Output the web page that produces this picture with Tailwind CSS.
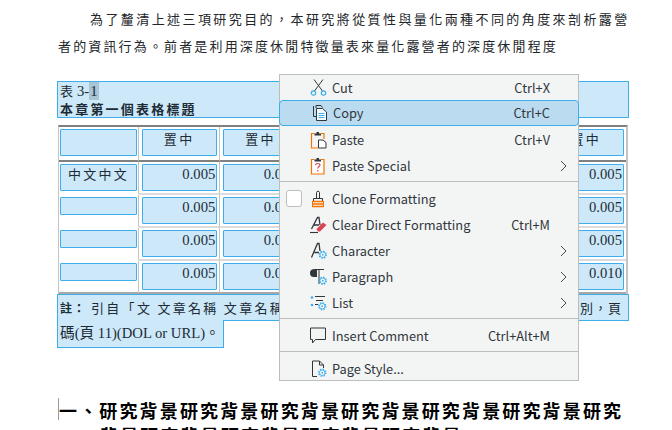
<!DOCTYPE html>
<html lang="zh-Hant">
<head>
    <meta charset="UTF-8">
    <title>Writer context menu</title>
    <script src="https://cdn.jsdelivr.net/npm/@tailwindcss/browser@4"></script>
</head>
<body class="bg-white">
    <svg class="hidden">
        <symbol id="gear" viewBox="0 0 10 10">
            <circle cx="5" cy="5" r="3.7" fill="none" stroke="#3daee9" stroke-width="1.5" stroke-dasharray="1.45 1.45"/>
            <circle cx="5" cy="5" r="2.9" fill="white" stroke="#3daee9" stroke-width="1"/>
            <circle cx="5" cy="5" r="1" fill="#3daee9"/>
        </symbol>
    </svg>

    <div class="relative w-[672px] h-[430px] overflow-hidden pl-[58px] pt-[5px] font-['Liberation_Serif','Noto_Sans_CJK_TC',serif] text-[#22262a]">
        <!-- Body text -->
        <div class="w-[570px] text-[13px] leading-[27px] whitespace-nowrap font-['Noto_Sans_CJK_TC',sans-serif]">
            <div class="pl-[32px] tracking-[2.42px]">為了釐清上述三項研究目的，本研究將從質性與量化兩種不同的角度來剖析露營</div>
            <div class="tracking-[2.15px]">者的資訊行為。前者是利用深度休閒特徵量表來量化露營者的深度休閒程度</div>
        </div>

        <!-- Caption -->
        <div class="mt-[22px] -ml-px w-[572px] h-[37px] border border-[#3daee9] bg-[#cde8f8] pl-[2px] text-[#1c2b36]">
            <div class="h-[18px] leading-[18px] text-[14.67px] flex">
                <span class="font-['Noto_Sans_CJK_TC',sans-serif] text-[13px] mr-[4px]">表</span><span>3-</span><span class="bg-[#a9c4d3] px-px">1</span>
            </div>
            <div class="h-[18px] leading-[18px] text-[13px] font-bold tracking-[2.2px] font-['Noto_Sans_CJK_TC',sans-serif]">本章第一個表格標題</div>
        </div>

        <!-- Table -->
        <div id="tbl" class="mt-[7px] w-[570px] border-t-2 border-t-[#808080] border-l border-l-[#c4c4c4] border-r-2 border-r-[#c4c4c4]"></div>

        <!-- Note -->
        <div class="-ml-px w-[572px] h-[27px] border border-[#3daee9] bg-[#cde8f8] pl-[2px] pr-[6px] flex justify-between items-center whitespace-nowrap text-[13px] tracking-[2.3px] font-['Noto_Sans_CJK_TC',sans-serif] text-[#1c2b36]">
            <span><b class="text-[12px] tracking-[1px] mr-[5px]">註：</b>引自「文 文章名稱 文章名稱</span>
            <span class="tracking-[1px]">別，頁</span>
        </div>
        <div class="-ml-px -mt-px w-[167px] h-[28px] border border-t-0 border-[#3daee9] bg-[#cde8f8] pl-[2px] leading-[26px] whitespace-nowrap text-[14.67px] text-[#1c2b36]">碼(頁 11)(DOL or URL)。</div>

        <!-- Heading -->
        <div class="mt-[50px] relative whitespace-nowrap text-[18px] leading-[27px] font-bold tracking-[2.15px] text-black font-['Noto_Sans_CJK_TC',sans-serif]">
            <div class="border-l border-[#9a9a9a] h-[22px] leading-[24px]">一、研究背景研究背景研究背景研究背景研究背景研究背景研究</div>
            <div class="pl-[42px] mt-[2px]">背景研究背景研究背景研究背景研究背景</div>
        </div>

        <!-- Context menu -->
        <div class="absolute left-[279px] top-[74px] w-[300px] h-[307px] border border-[#bcbdbd] bg-[#f3f5f5] text-[#31363b] text-[12.8px] font-['Noto_Sans_CJK_TC',sans-serif]">
            <div class="h-[26px] flex items-center pl-[30px] pr-[28px]">
                <svg class="w-[18px] h-[18px] shrink-0" viewBox="0 0 18 18" fill="none">
                    <path d="M4 .5 12.5 12M13 .5 4.5 12" stroke="#31363b" stroke-width="1"/>
                    <circle cx="3.5" cy="14" r="2.2" stroke="#3daee9" stroke-width="1.2"/>
                    <circle cx="13.5" cy="14" r="2.2" stroke="#3daee9" stroke-width="1.2"/>
                </svg>
                <span class="ml-[4px]">Cut</span><span class="ml-auto">Ctrl+X</span>
            </div>
            <div class="-mx-px -mt-px mb-px h-[26px] flex items-center pl-[31px] pr-[28px] rounded-[4px] border border-[#3daee9] bg-[#bbdcf0]">
                <svg class="w-[18px] h-[18px] shrink-0" viewBox="0 0 18 18" fill="none">
                    <path d="M5 4V1.5H10L11.5 3.5M2.5 2V12.5H5" stroke="#31363b" stroke-width="1"/>
                    <path d="M5.5 4.5H11.5L15.5 8V16.5H5.5Z" fill="#f3f9fd" stroke="#31363b" stroke-width="1"/>
                    <path d="M7.5 9.5H13.5M7.5 11.5H13.5M7.5 13.5H13.5" stroke="#3daee9" stroke-width="1"/>
                </svg>
                <span class="ml-[4px]">Copy</span><span class="ml-auto">Ctrl+C</span>
            </div>
            <div class="h-[26px] flex items-center pl-[30px] pr-[28px]">
                <svg class="w-[18px] h-[18px] shrink-0" viewBox="0 0 18 18" fill="none">
                    <path d="M4.5 2.5H1.5V17H8M11 2.5H14V8" stroke="#f67400" stroke-width="1.2"/>
                    <path d="M4.5 4.5V2.5H6.5V1H9V2.5H11V4.5Z" fill="#31363b"/>
                    <path d="M8.5 9H13L16 11.5V17H8.5Z" fill="white" stroke="#31363b" stroke-width="1"/>
                </svg>
                <span class="ml-[4px]">Paste</span><span class="ml-auto">Ctrl+V</span>
            </div>
            <div class="h-[26px] flex items-center pl-[30px] pr-[11px]">
                <svg class="w-[18px] h-[18px] shrink-0" viewBox="0 0 18 18" fill="none">
                    <path d="M4.5 2.5H1.5V17H14V2.5H11" fill="white" stroke="#f67400" stroke-width="1.2"/>
                    <path d="M4.5 4.5V2.5H6.5V1H9V2.5H11V4.5Z" fill="#31363b"/>
                    <path d="M5.5 8C5.5 6 10 6 10 8C10 9.5 7.8 9.5 7.8 11.5M7.8 13V14.5" stroke="#da4453" stroke-width="1.2"/>
                </svg>
                <span class="ml-[4px]">Paste Special</span>
                <svg class="ml-auto w-[7px] h-[12px]" viewBox="0 0 7 12" fill="none"><path d="M1 1 6 6 1 11" stroke="#31363b" stroke-width="0.9"/></svg>
            </div>
            <div class="h-[7px] pt-[2px]"><div class="h-px bg-[#bcbdbd]"></div></div>
            <div class="relative h-[26px] flex items-center pl-[30px] pr-[28px]">
                <div class="absolute left-[6px] top-[4px] w-[16px] h-[17px] rounded-[3px] border border-[#bcbdbd] bg-white"></div>
                <svg class="w-[18px] h-[18px] shrink-0" viewBox="0 0 18 18" fill="none">
                    <path d="M6.5 8V2.5C6.5 .8 9.5 .8 9.5 2.5V8" stroke="#31363b" stroke-width="1"/>
                    <path d="M3.5 11V8.5H12.5V11" stroke="#31363b" stroke-width="1"/>
                    <path d="M2.5 11.5H13.5M2.5 14H13.5M2.5 16.5H13.5" stroke="#f67400" stroke-width="1.3"/>
                    <path d="M2.5 11V17M13.5 11V17" stroke="#f67400" stroke-width="1"/>
                </svg>
                <span class="ml-[4px]">Clone Formatting</span>
            </div>
            <div class="h-[26px] flex items-center pl-[30px] pr-[28px]">
                <svg class="w-[18px] h-[18px] shrink-0" viewBox="0 0 18 18" fill="none">
                    <path d="M1.5 13 7.5 1.5H9L10 9M4 9H9" stroke="#31363b" stroke-width="1.3"/>
                    <path d="M0 16.5H8" stroke="#31363b" stroke-width="1.1"/>
                    <path d="M6.5 13 13 6.5 16.5 9 10 15.5H8Z" fill="#da4453"/>
                </svg>
                <span class="ml-[4px]">Clear Direct Formatting</span><span class="ml-auto">Ctrl+M</span>
            </div>
            <div class="h-[26px] flex items-center pl-[30px] pr-[11px]">
                <svg class="w-[18px] h-[18px] shrink-0" viewBox="0 0 18 18" fill="none">
                    <path d="M1.5 15.5 7.5 1.5H9L10 9M4.5 10.5H9" stroke="#31363b" stroke-width="1.3"/>
                    <use href="#gear" x="8" y="8" width="9.5" height="9.5"/>
                </svg>
                <span class="ml-[4px]">Character</span>
                <svg class="ml-auto w-[7px] h-[12px]" viewBox="0 0 7 12" fill="none"><path d="M1 1 6 6 1 11" stroke="#31363b" stroke-width="0.9"/></svg>
            </div>
            <div class="h-[26px] flex items-center pl-[30px] pr-[11px]">
                <svg class="w-[18px] h-[18px] shrink-0" viewBox="0 0 18 18" fill="none">
                    <path d="M5 1H14V2H9.5V16H8.5V2H7V9H5C1 9 0 7.5 0 5S1.5 1 5 1Z" fill="#31363b"/>
                    <use href="#gear" x="8" y="8" width="9.5" height="9.5"/>
                </svg>
                <span class="ml-[4px]">Paragraph</span>
                <svg class="ml-auto w-[7px] h-[12px]" viewBox="0 0 7 12" fill="none"><path d="M1 1 6 6 1 11" stroke="#31363b" stroke-width="0.9"/></svg>
            </div>
            <div class="h-[26px] flex items-center pl-[30px] pr-[11px]">
                <svg class="w-[18px] h-[18px] shrink-0" viewBox="0 0 18 18" fill="none">
                    <circle cx="2" cy="3.5" r="1.3" fill="#3daee9"/>
                    <circle cx="2" cy="11" r="1.3" fill="#3daee9"/>
                    <path d="M5 2.5H15M6 6.5H13M5 10.5H8" stroke="#31363b" stroke-width="1"/>
                    <use href="#gear" x="7.5" y="7.5" width="9.5" height="9.5"/>
                </svg>
                <span class="ml-[4px]">List</span>
                <svg class="ml-auto w-[7px] h-[12px]" viewBox="0 0 7 12" fill="none"><path d="M1 1 6 6 1 11" stroke="#31363b" stroke-width="0.9"/></svg>
            </div>
            <div class="h-[7px] pt-[2px]"><div class="h-px bg-[#bcbdbd]"></div></div>
            <div class="h-[26px] flex items-center pl-[30px] pr-[28px]">
                <svg class="w-[18px] h-[18px] shrink-0" viewBox="0 0 18 18" fill="none">
                    <path d="M.5 1H15.5V12.5H5.5L2.5 16V12.5H.5Z" stroke="#31363b" stroke-width="1"/>
                </svg>
                <span class="ml-[4px]">Insert Comment</span><span class="ml-auto">Ctrl+Alt+M</span>
            </div>
            <div class="h-[7px] pt-[2px]"><div class="h-px bg-[#bcbdbd]"></div></div>
            <div class="h-[23px] flex items-center pl-[30px] pr-[28px] pt-[3px]">
                <svg class="w-[18px] h-[18px] shrink-0" viewBox="0 0 18 18" fill="none">
                    <path d="M7 16.5H2.5V1H9.5L13.5 5V8M9.5 1V5H13.5" stroke="#31363b" stroke-width="1"/>
                    <use href="#gear" x="7.5" y="8" width="9.5" height="9.5"/>
                </svg>
                <span class="ml-[4px]">Page Style...</span>
            </div>
        </div>
    </div>

    <script>
        // Table rows, columns 3 to 5 sit fully behind the menu so they stay empty
        const rows = [
            { h: '', v: ['置中', '置中', '', '', '', '置中'] },
            { h: '中文中文', v: ['0.005', '0.005', '', '', '', '0.005'] },
            { h: '', v: ['0.005', '0.005', '', '', '', '0.005'] },
            { h: '', v: ['0.005', '0.005', '', '', '', '0.005'] },
            { h: '', v: ['0.005', '0.005', '', '', '', '0.010'] }
        ];
        const tbl = document.getElementById('tbl');
        rows.forEach((row, i) => {
            const head = i === 0;
            const rowBorder = head ? 'border-b-[2px] border-b-[#808080] h-[35px]' : (i === 4 ? 'border-b-[2px] border-b-[#a8a8a8] h-[33px]' : 'border-b-[2px] border-b-[#dcdcdc] h-[33px]');
            const firstBorder = head ? 'border-b-[2px] border-b-[#808080] h-[35px]' : (i === 4 ? 'border-b-[2px] border-b-[#a8a8a8] h-[33px]' : 'border-b-[2px] border-b-transparent h-[33px]');
            const firstH = i < 2 ? 'h-[27px]' : 'h-[18px]';
            let html = `<div class="w-[80px] shrink-0 border-r border-r-[#c4c4c4] pl-px pt-[2px] ${firstBorder}">
                <div class="w-[77px] ${firstH} rounded-[1px] border border-[#3daee9] bg-[#cde8f8] text-center text-[13px] tracking-[2.3px] leading-[18px] text-[#1c2b36] font-['Noto_Sans_CJK_TC',sans-serif]">${row.h}</div></div>`;
            row.v.forEach((val, j) => {
                const num = head ? "text-center text-[13px] tracking-[2.3px] leading-[18px] font-['Noto_Sans_CJK_TC',sans-serif]" : 'text-right text-[14.67px] leading-[18px]';
                const last = j === 5 ? '' : 'border-r border-r-[#c4c4c4]';
                html += `<div class="flex-1 min-w-0 ${last} pl-[3px] pr-[2px] pt-[2px] ${rowBorder}">
                    <div class="h-[27px] rounded-[1px] border border-[#3daee9] bg-[#cde8f8] pr-px text-[#1c2b36] ${num}">${val}</div></div>`;
            });
            tbl.innerHTML += `<div class="flex">${html}</div>`;
        });
    </script>
</body>
</html>
